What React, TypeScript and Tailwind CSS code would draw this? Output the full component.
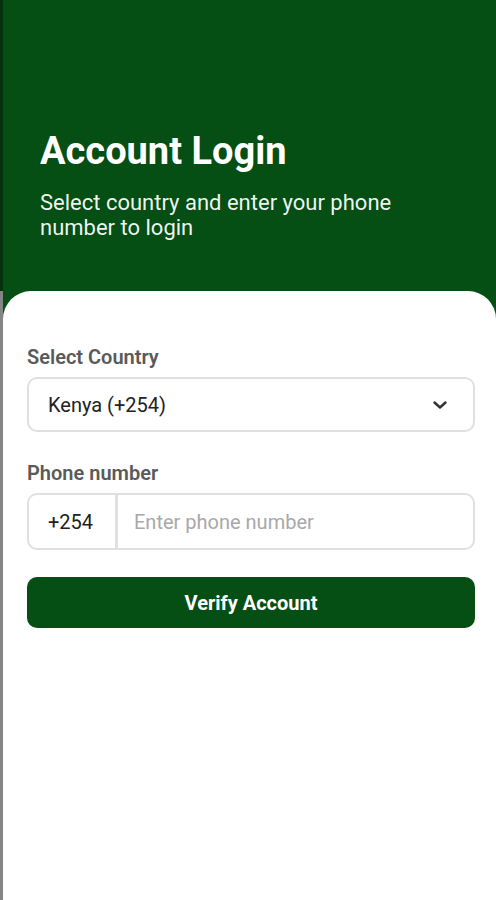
const App = () => {
  return (
    <div className="flex min-h-[900px] w-full bg-white font-['Roboto',sans-serif]">
      <div className="flex w-[3px] flex-col">
        <div className="h-[291px] bg-[#02330b]" />
        <div className="flex-1 bg-[#858585]" />
      </div>
      <div className="flex flex-1 flex-col bg-white">
        <header className="bg-[#054e14] pl-[37px] pr-6 pt-[130px] pb-[80px] text-white">
          <h1 className="text-[38px] font-bold leading-[42px]">Account Login</h1>
          <p className="mt-[18px] text-[22px] leading-[25px] text-white/95">
            Select country and enter your phone
            <br />
            number to login
          </p>
        </header>
        <main className="-mt-[29px] flex-1 rounded-t-[28px] bg-white pl-6 pr-[21px] pt-[54px]">
          <label className="block text-[20px] font-semibold leading-6 text-[#5a5a5a]">
            Select Country
          </label>
          <div className="mt-2 flex h-[55px] items-center justify-between rounded-[10px] border-2 border-[#e0e0e0] pl-[19px] pr-[26px]">
            <span className="text-[20px] text-[#222]">Kenya (+254)</span>
            <svg width="14" height="8" viewBox="0 0 14 8" fill="none">
              <path d="M1.5 1.5 7 6.5 12.5 1.5" stroke="#333" strokeWidth="2.4" strokeLinecap="round" strokeLinejoin="round" />
            </svg>
          </div>

          <label className="mt-[29px] block text-[20px] font-semibold leading-6 text-[#5a5a5a]">
            Phone number
          </label>
          <div className="mt-2 flex h-[57px] overflow-hidden rounded-[10px] border-2 border-[#e0e0e0]">
            <div className="flex w-[89px] items-center border-r-[3px] border-[#e0e0e0] pl-[19px] text-[20px] text-[#222]">
              +254
            </div>
            <input
              className="flex-1 bg-transparent pl-[16px] text-[20px] text-[#222] placeholder:text-[#a8a8a8] outline-none"
              placeholder="Enter phone number"
            />
          </div>

          <button
            type="button"
            className="mt-[27px] h-[51px] w-full rounded-[10px] bg-[#054e14] text-[20px] font-bold text-white"
          >
            Verify Account
          </button>
        </main>
      </div>
    </div>
  )
}

export default App
